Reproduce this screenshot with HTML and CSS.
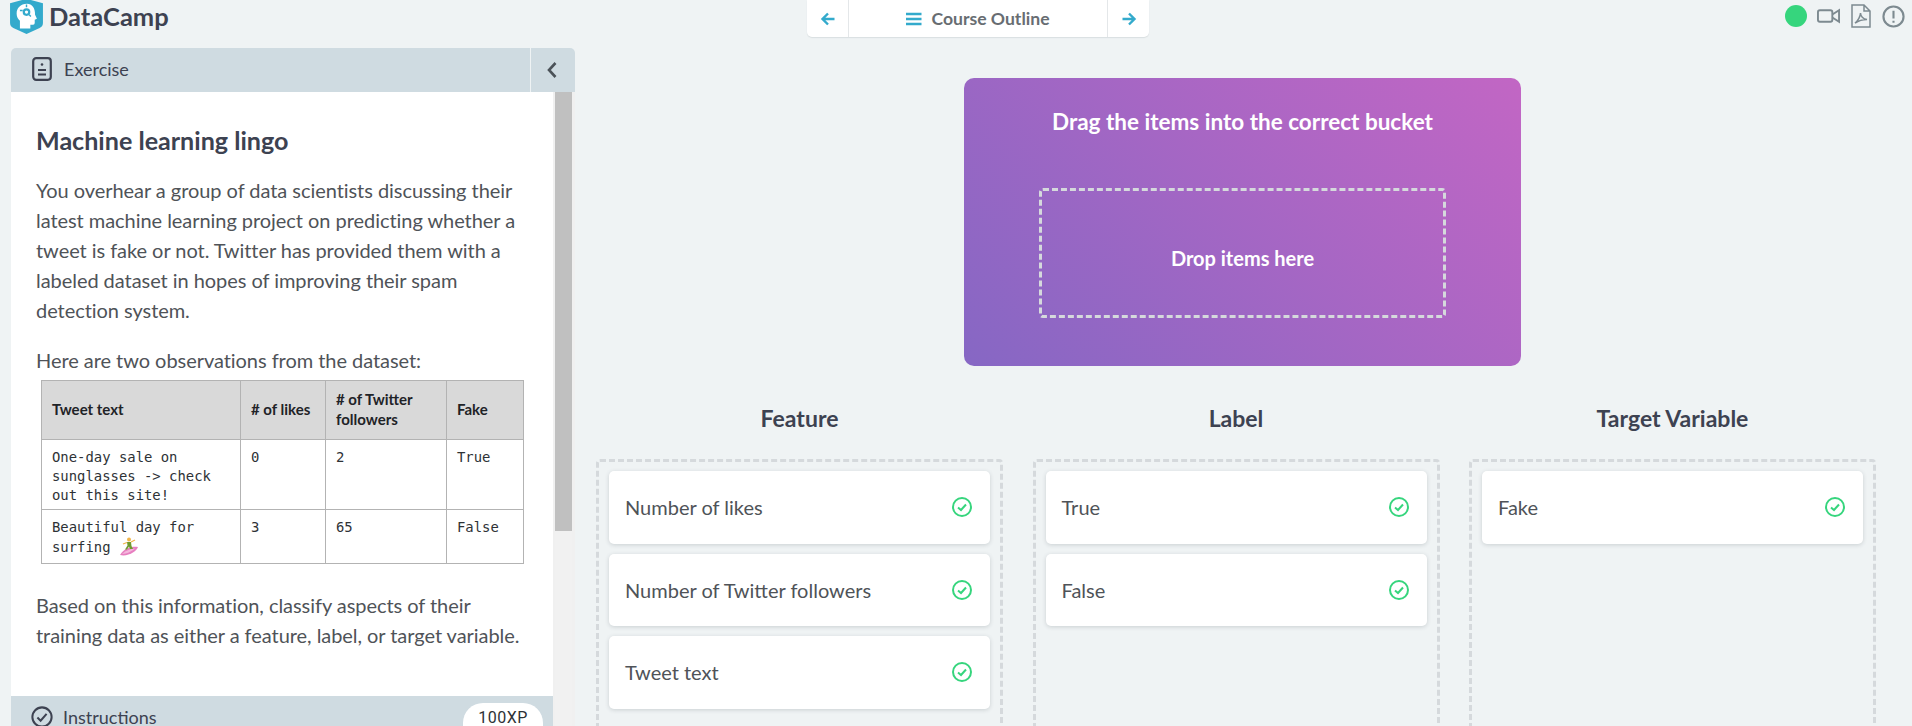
FILE: index.html
```html
<!DOCTYPE html>
<html lang="en">
<head>
<meta charset="utf-8">
<title>DataCamp</title>
<link rel="stylesheet" href="styles.css">
</head>
<body>
<header class="topbar">
  <div class="brand">
    <svg class="logo" viewBox="0 0 30 31" aria-hidden="true">
      <path fill="#33aacc" d="M0 3 L11 0 H19 L30 3 V21 Q30 24 27 25.500 L15 31 L3 25.500 Q0 24 0 21 Z"/>
      <path fill="#fff" d="M15.500 3.500 C9.500 3.500 6 7.500 6 12.500 C6 15.500 7.500 17.500 9 19 V26 H18.500 V22.500 H21 Q22.500 22.500 22.500 21 V18 L24.500 17 L22.800 13.500 C23 7.500 20 3.500 15.500 3.500 Z"/>
      <circle cx="15" cy="11" r="3.500" fill="#33aacc"/>
      <circle cx="15" cy="11" r="1.500" fill="#fff"/>
      <path fill="none" stroke="#33aacc" stroke-width="1.300" d="M9 9.500 H11.500 M15 4 V6.500 M19 15 L17.500 13.500"/>
    </svg>
    <span class="brand-name">DataCamp</span>
  </div>
  <nav class="course-nav">
    <span class="nav-arrow">
      <svg viewBox="0 0 16 16" class="arrow-icon"><path d="M14.500 8 H2.500 M8 2.500 L2.500 8 L8 13.500" /></svg>
    </span>
    <span class="nav-mid">
      <svg viewBox="0 0 16 14" class="menu-icon"><path d="M0 2 H15.500 M0 7 H15.500 M0 12 H15.500"/></svg>
      Course Outline
    </span>
    <span class="nav-arrow">
      <svg viewBox="0 0 16 16" class="arrow-icon"><path d="M1.500 8 H13.500 M8 2.500 L13.500 8 L8 13.500" /></svg>
    </span>
  </nav>
  <div class="tools">
    <span class="dot"></span>
    <svg class="tool-video" viewBox="0 0 24 16"><rect x="1" y="2" width="15" height="12" rx="2"/><path d="M16 6.500 L23 2 V14 L16 9.500"/></svg>
    <svg class="tool-pdf" viewBox="0 0 20 24"><path d="M1 1 H13 L19 7 V23 H1 Z M13 1 V7 H19"/><path d="M4 19 C7 17 9.500 12 9.500 9 C9.500 12 12 15 16 15.500 C12.500 15.500 8 16.500 4 19 Z"/></svg>
    <svg class="tool-alert" viewBox="0 0 24 24"><circle cx="12" cy="12" r="10.500"/><path d="M12 6 V14 M12 16.500 V18.500"/></svg>
  </div>
</header>

<main class="workspace">
  <section class="panel">
    <div class="panel-head">
      <div class="panel-title">
        <svg class="doc-icon" viewBox="0 0 20 24"><rect x="1.200" y="1.200" width="17.600" height="21.600" rx="3"/><path d="M6 13 H14 M6 17.500 H14"/><circle cx="10" cy="7.500" r="1.300" class="doc-dot"/></svg>
        Exercise
      </div>
      <button class="collapse" type="button" aria-label="Collapse">
        <svg viewBox="0 0 12 18" class="chev"><path d="M9.500 2 L3 9 L9.500 16"/></svg>
      </button>
    </div>
    <div class="panel-body">
      <div class="panel-content">
        <div class="scroll-text">
          <h1 class="lesson-title">Machine learning lingo</h1>
          <p class="para para-first">You overhear a group of data scientists discussing their latest machine learning project on predicting whether a tweet is fake or not. Twitter has provided them with a labeled dataset in hopes of improving their spam detection system.</p>
          <p class="para para-tight">Here are two observations from the dataset:</p>
          <table class="data">
            <colgroup><col class="c1"><col class="c2"><col class="c3"><col class="c4"></colgroup>
            <thead>
              <tr><th>Tweet text</th><th># of likes</th><th># of Twitter followers</th><th>Fake</th></tr>
            </thead>
            <tbody>
              <tr class="row-a"><td>One-day sale on sunglasses -&gt; check out this site!</td><td>0</td><td>2</td><td>True</td></tr>
              <tr class="row-b"><td>Beautiful day for surfing <svg class="surfer" viewBox="0 0 20 20"><path fill="#e77fc0" d="M1 18 C5 11 13 9 19 10 C18 14 9 20 1 18 Z"/><path fill="#f4b6dc" d="M3 17 C7 13 12 12 16 11.500 C13 14 8 17 3 17 Z"/><circle cx="10" cy="2.500" r="2" fill="#f0b54a"/><path fill="#6f9a2e" d="M8 5 H12 L12.500 9 L14 12 H11 L10 9.500 L8 12.500 H6 L8.500 8.500 Z"/><path fill="none" stroke="#f0b54a" stroke-width="1.300" d="M8 5.500 L4 7 M12 5 L16 3"/></svg></td><td>3</td><td>65</td><td>False</td></tr>
            </tbody>
          </table>
          <p class="para para-after">Based on this information, classify aspects of their training data as either a feature, label, or target variable.</p>
        </div>
        <div class="instr-bar">
          <div class="instr-label">
            <svg class="instr-icon" viewBox="0 0 24 24"><circle cx="12" cy="12" r="10.500"/><path d="M7 12.500 L10.500 16 L17 8.500"/></svg>
            Instructions
          </div>
          <span class="xp">100XP</span>
        </div>
      </div>
      <div class="scrollbar"><div class="thumb"></div></div>
    </div>
  </section>

  <section class="game">
    <div class="hero">
      <h2 class="hero-title">Drag the items into the correct bucket</h2>
      <div class="dropzone">Drop items here</div>
    </div>
    <div class="buckets">
      <div class="bucket">
        <h3 class="bucket-title">Feature</h3>
        <div class="bucket-box">
          <div class="item"><span>Number of likes</span><svg class="ok" viewBox="0 0 20 20"><circle cx="10" cy="10" r="9"/><path d="M6 10.500 L9 13 L14 7.500"/></svg></div>
          <div class="item"><span>Number of Twitter followers</span><svg class="ok" viewBox="0 0 20 20"><circle cx="10" cy="10" r="9"/><path d="M6 10.500 L9 13 L14 7.500"/></svg></div>
          <div class="item"><span>Tweet text</span><svg class="ok" viewBox="0 0 20 20"><circle cx="10" cy="10" r="9"/><path d="M6 10.500 L9 13 L14 7.500"/></svg></div>
        </div>
      </div>
      <div class="bucket">
        <h3 class="bucket-title">Label</h3>
        <div class="bucket-box">
          <div class="item"><span>True</span><svg class="ok" viewBox="0 0 20 20"><circle cx="10" cy="10" r="9"/><path d="M6 10.500 L9 13 L14 7.500"/></svg></div>
          <div class="item"><span>False</span><svg class="ok" viewBox="0 0 20 20"><circle cx="10" cy="10" r="9"/><path d="M6 10.500 L9 13 L14 7.500"/></svg></div>
        </div>
      </div>
      <div class="bucket">
        <h3 class="bucket-title">Target Variable</h3>
        <div class="bucket-box">
          <div class="item"><span>Fake</span><svg class="ok" viewBox="0 0 20 20"><circle cx="10" cy="10" r="9"/><path d="M6 10.500 L9 13 L14 7.500"/></svg></div>
        </div>
      </div>
    </div>
  </section>
</main>
</body>
</html>
```
FILE: styles.css
```css
* { box-sizing: border-box; }
html, body { margin: 0; height: 726px; overflow: hidden; }
body {
  background: #eff3f4;
  font-family: Lato, "Liberation Sans", sans-serif;
  color: #4f5358;
  width: 1912px;
}
.topbar {
  height: 48px;
  display: grid;
  grid-template-columns: 807px 342px 1fr;
  align-items: start;
}
.brand { display: flex; align-items: flex-start; padding-left: 10px; }
.logo { width: 33px; height: 34px; display: block; flex: none; }
.brand-name {
  margin-left: 6px;
  font-size: 25.500px;
  line-height: 33px;
  font-weight: 700;
  color: #3d4251;
}
.course-nav {
  height: 37px;
  display: flex;
  background: #fff;
  border-radius: 0 0 5px 5px;
  box-shadow: 0 1px 1px rgba(60, 70, 80, .12);
}
.nav-arrow { width: 41px; display: flex; align-items: center; justify-content: center; flex: none; }
.nav-mid {
  flex: 1;
  display: flex;
  align-items: center;
  justify-content: center;
  gap: 9px;
  border-left: 1px solid #e4e7e9;
  border-right: 1px solid #e4e7e9;
  font-size: 17.600px;
  font-weight: 700;
  color: #686d72;
}
.arrow-icon { width: 16px; height: 16px; fill: none; stroke: #33aacc; stroke-width: 2.400; }
.menu-icon { width: 16px; height: 14px; fill: none; stroke: #33aacc; stroke-width: 2.400; }
.tools { display: flex; align-items: center; padding-left: 636px; height: 32px; }
.dot { width: 22px; height: 22px; border-radius: 50%; background: #36d57d; flex: none; }
.tool-video { width: 23px; height: 16px; margin-left: 10px; fill: none; stroke: #7d8a90; stroke-width: 2; }
.tool-pdf { width: 20px; height: 24px; margin-left: 11px; fill: none; stroke: #7d8a90; stroke-width: 1.500; }
.tool-alert { width: 23px; height: 23px; margin-left: 11px; fill: none; stroke: #7d8a90; stroke-width: 2.200; }

.workspace { display: flex; height: 678px; align-items: flex-start; overflow: hidden; }
.panel {
  width: 564px;
  margin-left: 11px;
  flex: none;
}
.panel-head {
  height: 44px;
  background: #cfdbe1;
  border-radius: 5px 5px 0 0;
  display: flex;
  justify-content: space-between;
}
.panel-title {
  display: flex;
  align-items: center;
  padding: 0 0 2px 21px;
  gap: 12px;
  font-size: 18px;
  color: #3d4251;
}
.doc-icon { width: 20px; height: 24px; fill: none; stroke: #3d4251; stroke-width: 2.200; }
.doc-dot { fill: #3d4251; stroke: none; }
.collapse {
  width: 45px;
  padding: 0 2px 0 0;
  border: 0;
  border-left: 1px solid #eff3f4;
  background: transparent;
  display: flex;
  align-items: center;
  justify-content: center;
}
.chev { width: 12px; height: 18px; fill: none; stroke: #4b5258; stroke-width: 2.600; }
.panel-body { display: flex; height: 634px; background: #f0f0f0; overflow: hidden; }
.panel-content { width: 542px; flex: none; background: #fff; }
.scroll-text { height: 604px; padding: 32px 25px 0 25px; }
.lesson-title {
  margin: 0;
  font-size: 25.100px;
  line-height: 32px;
  font-weight: 700;
  color: #3d4251;
}
.para { margin: 0; font-size: 20px; line-height: 30px; color: #4f5358; letter-spacing: -0.050px; }
.para-first { margin-top: 19px; }
.para-tight { margin-top: 20px; }
.para-after { margin-top: 26px; }
.data {
  border-collapse: collapse;
  table-layout: fixed;
  width: 482px;
  margin: 5px 0 0 5px;
  font-size: 14px;
}
.c1 { width: 199px; }
.c2 { width: 85px; }
.c3 { width: 121px; }
.c4 { width: 77px; }
.data th, .data td { border: 1.500px solid #b3b3b3; padding: 0 10px; text-align: left; }
.data th {
  height: 59px;
  padding-bottom: 2px;
  background: #d9d9d9;
  color: #1f2327;
  font-weight: 700;
  font-size: 15px;
  line-height: 20px;
  vertical-align: middle;
}
.data td {
  font-family: "DejaVu Sans Mono", "Liberation Mono", monospace;
  font-size: 13.900px;
  line-height: 19px;
  color: #2e3236;
  vertical-align: top;
  padding-top: 8px;
}
.row-a td { height: 70px; }
.row-b td { height: 54px; }
.surfer { width: 20px; height: 20px; vertical-align: -5px; }
.instr-bar {
  height: 30px;
  background: #cfdbe1;
  display: flex;
  justify-content: space-between;
  padding: 0 10px 0 20px;
  overflow: hidden;
}
.instr-label { display: flex; align-items: center; gap: 10px; height: 18px; margin-top: 12px; line-height: 18px; font-size: 18px; color: #3d4251; }
.instr-icon { width: 22px; height: 22px; flex: none; fill: none; stroke: #3d4251; stroke-width: 2.200; }
.xp {
  width: 80px;
  height: 23px;
  margin-top: 7px;
  border-radius: 20px 20px 0 0;
  background: #fff;
  text-align: center;
  font-family: Roboto, "Liberation Sans", sans-serif;
  font-size: 16px;
  line-height: 29px;
  color: #2e3236;
  letter-spacing: 0.500px;
}
.scrollbar { width: 17px; margin-left: 2px; flex: none; background: #f1f1f1; }
.thumb { height: 439px; background: #c0c0c0; }

.game { flex: 1; min-width: 0; padding: 30px 37px 0 21px; }
.hero {
  width: 557px;
  height: 288px;
  margin-left: 368px;
  border-radius: 10px;
  background: linear-gradient(45deg, #8667c4 0%, #c266c4 100%);
  padding-top: 27px;
  color: #fff;
}
.hero-title {
  margin: 0;
  text-align: center;
  font-size: 22.500px;
  line-height: 34px;
  font-weight: 700;
}
.dropzone {
  width: 407px;
  height: 130px;
  margin: 49px 0 0 75px;
  padding-top: 10px;
  border: 3px dashed #d5d9dc;
  border-radius: 4px;
  display: flex;
  align-items: center;
  justify-content: center;
  font-size: 20px;
  font-weight: 700;
}
.buckets { display: grid; grid-template-columns: repeat(3, 407px); column-gap: 29.500px; margin-top: 37px; }
.bucket-title {
  margin: 0;
  text-align: center;
  font-size: 23px;
  line-height: 30px;
  font-weight: 700;
  color: #3d4251;
}
.bucket-box {
  height: 280px;
  margin-top: 26px;
  border: 3px dashed #d5d9dc;
  border-radius: 4px;
  padding: 9px 10px 0;
  display: flex;
  flex-direction: column;
  gap: 10px;
}
.item {
  height: 72.500px;
  flex: none;
  background: #fff;
  border-radius: 5px;
  box-shadow: 0 1px 4px rgba(60, 70, 80, .2);
  display: flex;
  align-items: center;
  justify-content: space-between;
  padding: 0 18px 0 16px;
  font-size: 20px;
  color: #4f5358;
}
.ok { width: 20px; height: 20px; fill: none; stroke: #36d57d; stroke-width: 2; }
```
